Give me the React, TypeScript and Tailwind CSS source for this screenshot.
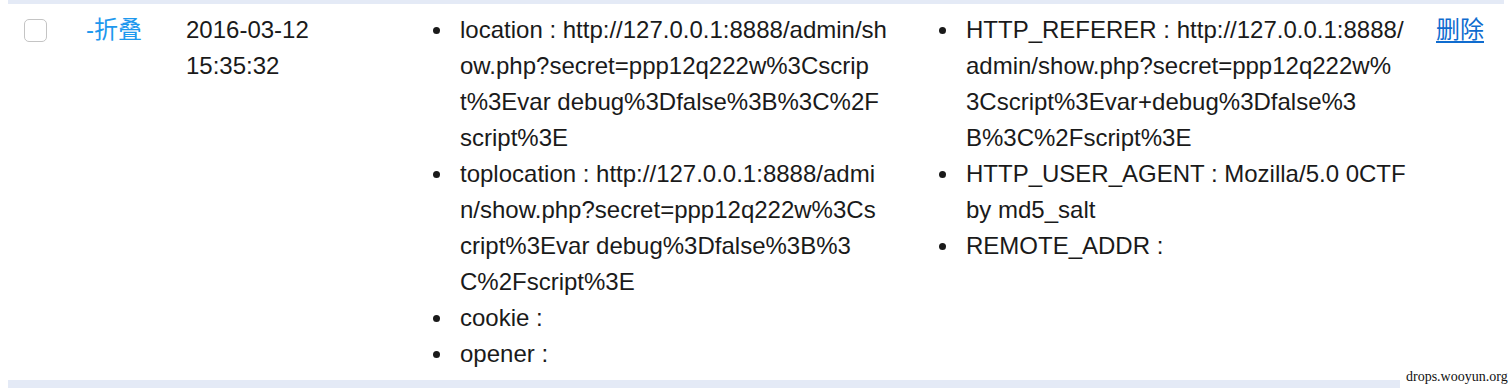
import React from "react";

const font = { fontFamily: '"Liberation Sans", Helvetica, Arial, "Noto Sans CJK SC", sans-serif' };

function Bullet({ lines }: { lines: string[] }) {
  return (
    <li className="flex">
      <span className="w-[28px] shrink-0 flex items-start pt-[15px] pl-[1px]">
        <span className="block w-[7px] h-[7px] rounded-full bg-[#1a1a1a]" />
      </span>
      <span className="block">
        {lines.map((l, i) => (
          <span key={i} className="block whitespace-nowrap">
            {l}
          </span>
        ))}
      </span>
    </li>
  );
}

export default function App() {
  return (
    <div className="relative w-[1512px] h-[388px] bg-white overflow-hidden" style={font}>
      <div className="px-2">
        <div className="h-[4px] bg-[#e4eaf6]" />
        <div className="flex pt-[8px] pb-[8px] text-[24px] leading-[36px] text-[#1a1a1a]">
          <div className="w-[78px] shrink-0 pl-4 pt-[7px]">
            <span className="block w-[23px] h-[23px] rounded-[5px] border border-[#c4c4c4] bg-white" />
          </div>
          <div className="w-[100px] shrink-0 text-[#1d98ee]">-折叠</div>
          <div className="w-[246px] shrink-0">
            <div>2016-03-12</div>
            <div>15:35:32</div>
          </div>
          <ul className="w-[506px] shrink-0">
            <Bullet
              lines={[
                "location : http://127.0.0.1:8888/admin/sh",
                "ow.php?secret=ppp12q222w%3Cscrip",
                "t%3Evar debug%3Dfalse%3B%3C%2F",
                "script%3E",
              ]}
            />
            <Bullet
              lines={[
                "toplocation : http://127.0.0.1:8888/admi",
                "n/show.php?secret=ppp12q222w%3Cs",
                "cript%3Evar debug%3Dfalse%3B%3",
                "C%2Fscript%3E",
              ]}
            />
            <Bullet lines={["cookie :"]} />
            <Bullet lines={["opener :"]} />
          </ul>
          <ul className="w-[498px] shrink-0">
            <Bullet
              lines={[
                "HTTP_REFERER : http://127.0.0.1:8888/",
                "admin/show.php?secret=ppp12q222w%",
                "3Cscript%3Evar+debug%3Dfalse%3",
                "B%3C%2Fscript%3E",
              ]}
            />
            <Bullet lines={["HTTP_USER_AGENT : Mozilla/5.0 0CTF", "by md5_salt"]} />
            <Bullet lines={["REMOTE_ADDR :"]} />
          </ul>
          <div className="flex-1">
            <a href="#" className="text-[#0f6ccf] underline underline-offset-[3px]">
              删除
            </a>
          </div>
        </div>
        <div className="h-[10px] bg-[#e4eaf6]" />
      </div>
      <div
        className="absolute right-0 bottom-0 w-[112px] h-[22px] bg-white text-[14px] leading-[22px] text-[#111] pl-[6px]"
        style={{ fontFamily: '"Liberation Serif", "Times New Roman", serif' }}
      >
        drops.wooyun.org
      </div>
    </div>
  );
}
